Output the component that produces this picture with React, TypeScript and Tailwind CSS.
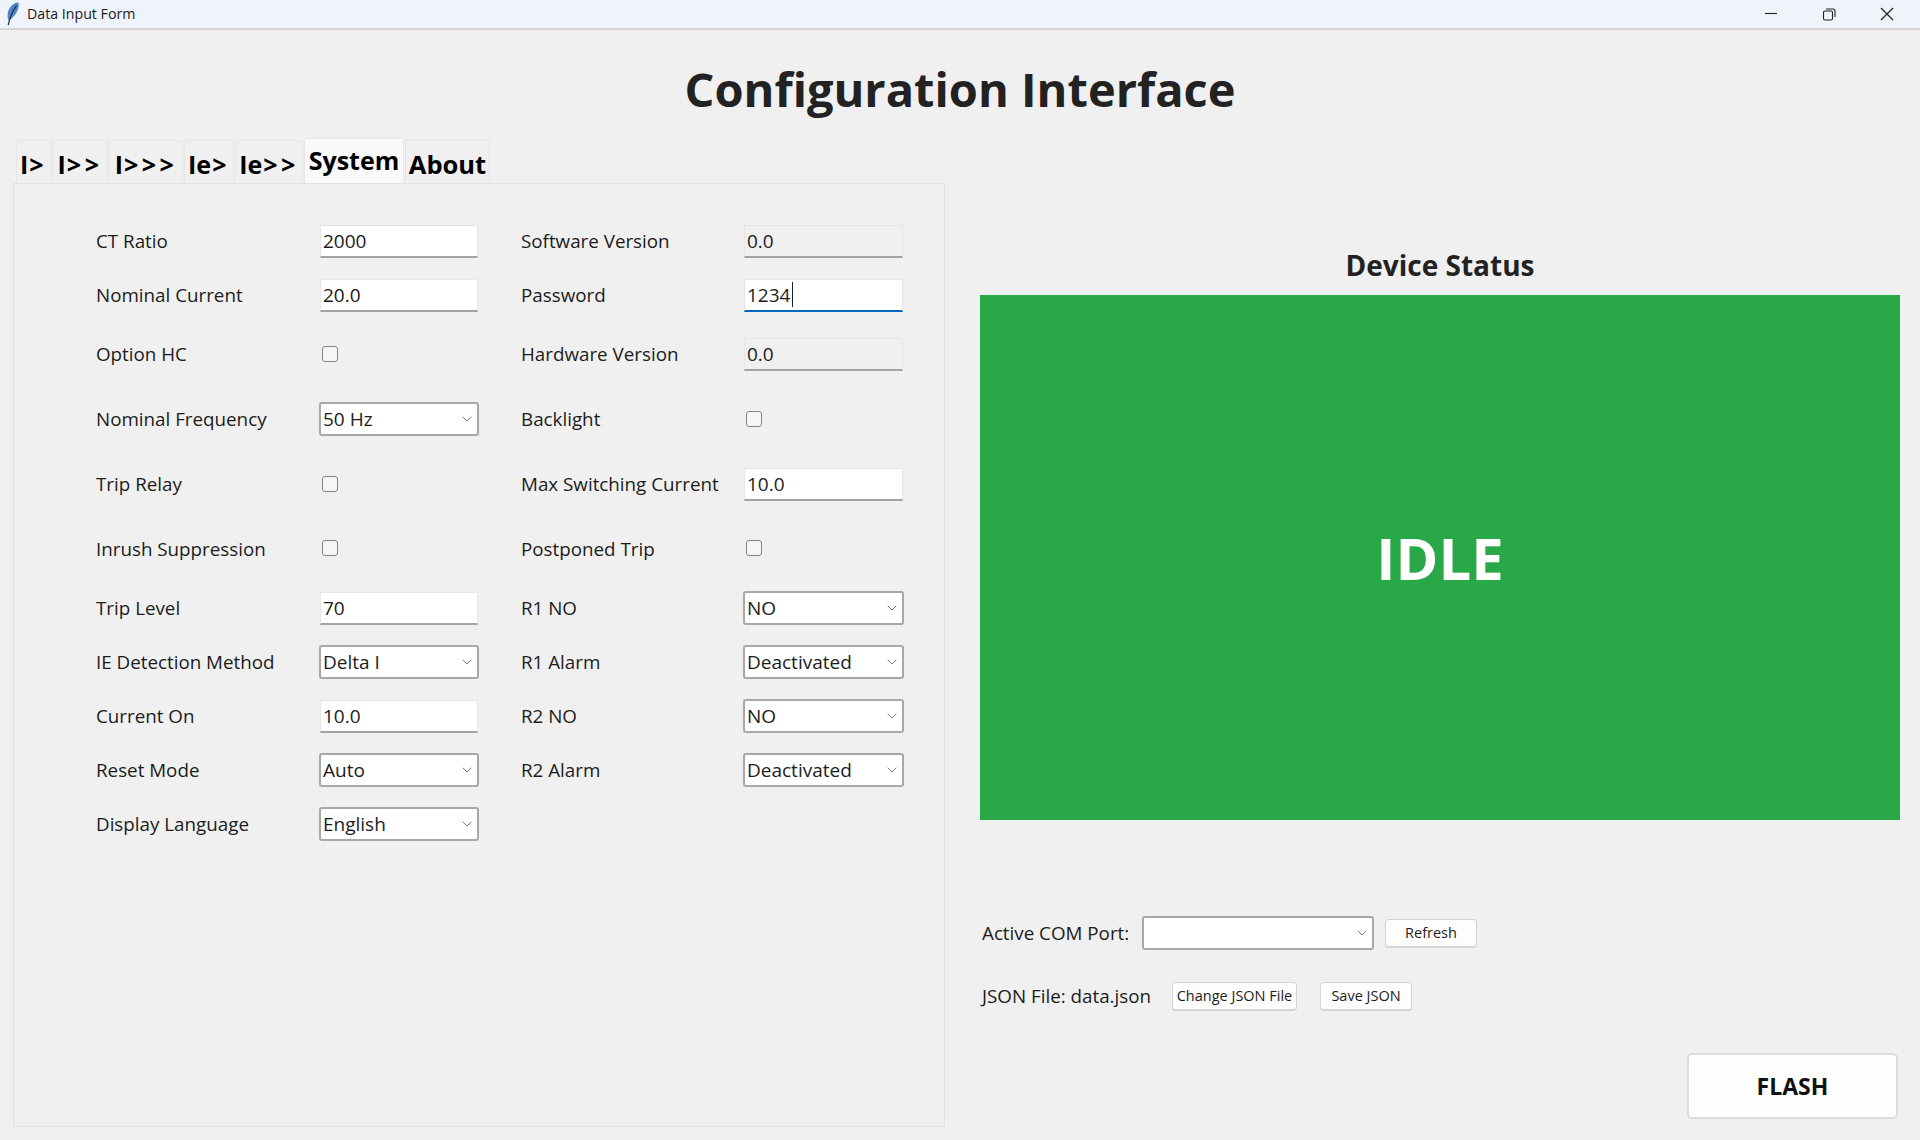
import React from 'react';
import { ChevronDown } from 'lucide-react';

const FONT = 'font-["Open_Sans","Noto_Sans",sans-serif]';

const TextField = ({ value, readOnly, focused }: { value: string; readOnly?: boolean; focused?: boolean }) => (
  <div className="relative w-full h-[33px] -mt-[2px]">
    <input
      readOnly
      value={value}
      className={`w-full h-full pl-[2px] text-[19px] text-[#1c1c1c] outline-none border border-[#e6e6e6] ${
        focused ? 'bg-white border-b-2 border-b-[#0067c0]' : readOnly ? 'bg-[#f0f0f0] border-b-2 border-b-[#a3a3a3]' : 'bg-white border-b-2 border-b-[#a3a3a3]'
      }`}
    />
    {focused && <span className="absolute left-[48px] top-[3px] w-[1px] h-[25px] bg-[#222]" />}
  </div>
);

const Combo = ({ value }: { value?: string }) => (
  <div className="w-[calc(100%+2px)] -ml-[1px] -mt-[2px] h-[34px] flex items-center justify-between pl-[2px] pr-[2px] bg-white border-2 border-[#a8a8a8] rounded-[3px] text-[19px] text-[#1c1c1c]">
    <span>{value}</span>
    <ChevronDown size={16} strokeWidth={1.3} className="text-[#666]" />
  </div>
);

const Check = () => (
  <input type="checkbox" readOnly className="appearance-none block w-[16px] h-[16px] ml-[2px] -mt-[3px] bg-[#f6f6f6] border border-[#858585] rounded-[3px]" />
);

type Row = { label: string; kind: 'text' | 'readonly' | 'focus' | 'combo' | 'check'; value?: string };

const leftRows: Row[] = [
  { label: 'CT Ratio', kind: 'text', value: '2000' },
  { label: 'Nominal Current', kind: 'text', value: '20.0' },
  { label: 'Option HC', kind: 'check' },
  { label: 'Nominal Frequency', kind: 'combo', value: '50 Hz' },
  { label: 'Trip Relay', kind: 'check' },
  { label: 'Inrush Suppression', kind: 'check' },
  { label: 'Trip Level', kind: 'text', value: '70' },
  { label: 'IE Detection Method', kind: 'combo', value: 'Delta I' },
  { label: 'Current On', kind: 'text', value: '10.0' },
  { label: 'Reset Mode', kind: 'combo', value: 'Auto' },
  { label: 'Display Language', kind: 'combo', value: 'English' },
];

const rightRows: Row[] = [
  { label: 'Software Version', kind: 'readonly', value: '0.0' },
  { label: 'Password', kind: 'focus', value: '1234' },
  { label: 'Hardware Version', kind: 'readonly', value: '0.0' },
  { label: 'Backlight', kind: 'check' },
  { label: 'Max Switching Current', kind: 'text', value: '10.0' },
  { label: 'Postponed Trip', kind: 'check' },
  { label: 'R1 NO', kind: 'combo', value: 'NO' },
  { label: 'R1 Alarm', kind: 'combo', value: 'Deactivated' },
  { label: 'R2 NO', kind: 'combo', value: 'NO' },
  { label: 'R2 Alarm', kind: 'combo', value: 'Deactivated' },
];

const FormColumn = ({ rows, labelClass }: { rows: Row[]; labelClass: string }) => (
  <div className={`grid ${labelClass} grid-rows-[54px_54px_64px_66px_64px_65px_54px_54px_54px_54px_54px] items-center`}>
    {rows.map((r) => (
      <React.Fragment key={r.label}>
        <label className="text-[18.8px] text-[#1c1c1c] whitespace-nowrap -mt-[1px]">{r.label}</label>
        {r.kind === 'check' && <Check />}
        {r.kind === 'combo' && <Combo value={r.value} />}
        {r.kind === 'text' && <TextField value={r.value!} />}
        {r.kind === 'readonly' && <TextField value={r.value!} readOnly />}
        {r.kind === 'focus' && <TextField value={r.value!} focused />}
      </React.Fragment>
    ))}
  </div>
);

const tabs = [
  { name: 'I', arrows: '>', w: 'w-[35px]' },
  { name: 'I', arrows: '>>', w: 'w-[56px]' },
  { name: 'I', arrows: '>>>', w: 'w-[74px]' },
  { name: 'Ie', arrows: '>', w: 'w-[50px]' },
  { name: 'Ie', arrows: '>>', w: 'w-[68px]' },
];

const SmallButton = ({ children, w }: { children: React.ReactNode; w: string }) => (
  <button className={`${w} h-[29px] bg-[#fdfdfd] border border-[#d4d4d4] border-b-2 rounded-[4px] text-[14.5px] text-[#1c1c1c] whitespace-nowrap`}>
    {children}
  </button>
);

export default function App() {
  return (
    <div className={`w-[1920px] h-[1140px] flex flex-col overflow-hidden bg-[#f0f0f0] ${FONT}`}>
      {/* title bar */}
      <div className="h-[30px] shrink-0 flex items-center bg-[#eff4fb] border-b-2 border-[#d5d5d5]">
        <svg width="14" height="24" viewBox="0 0 14 24" className="ml-[6px]">
          <path d="M12 0.5 C7 1 3 5 1.8 11 C1.2 14.5 1.8 17 2.8 18.5 C6.5 16.5 10.5 12 12.2 6.5 C13 3.8 13 1.5 12 0.5 Z" fill="#4f86c6" />
          <path d="M10.5 3.5 C7 8.5 4 15 2.2 23" fill="none" stroke="#20303f" strokeWidth="1.3" />
        </svg>
        <span className="ml-[7px] text-[14.2px] text-[#1c1c1c]">Data Input Form</span>
        <div className="ml-auto flex items-center mr-[3px]">
          <svg width="58" height="29" viewBox="0 0 58 29"><path d="M23 13.5 H35" stroke="#222" strokeWidth="1.1" /></svg>
          <svg width="58" height="29" viewBox="0 0 58 29" fill="none" stroke="#222" strokeWidth="1.1">
            <rect x="23.5" y="11" width="9" height="9" rx="1.5" />
            <path d="M26 9 H33 Q35 9 35 11 V17" />
          </svg>
          <svg width="58" height="29" viewBox="0 0 58 29" className="mr-[1px]"><path d="M23 8 L35 20 M35 8 L23 20" stroke="#222" strokeWidth="1.2" /></svg>
        </div>
      </div>

      <h1 className="h-[108px] shrink-0 flex items-center justify-center text-[47px] font-bold text-[#222] pt-[11px]">
        Configuration Interface
      </h1>

      <div className="flex-1 flex min-h-0">
        {/* tabs and form */}
        <div className="ml-[13px] w-[932px] mb-[13px] flex flex-col">
          <div className="h-[45px] shrink-0 flex items-end pl-[3px] gap-[1px]">
            {tabs.map((t) => (
              <div key={t.name + t.arrows} className={`${t.w} h-[43px] flex items-end justify-center bg-[#f0f0f0] border border-b-0 border-[#e6e6e6] text-[25px] font-bold text-black whitespace-nowrap`}>
                <span>{t.name}</span>
                <span className="tracking-[3.5px] ml-[1px]">{t.arrows}</span>
              </div>
            ))}
            <div className="w-[100px] h-[45px] flex items-center justify-center bg-[#f9f9f9] border border-b-0 border-[#e6e6e6] text-[25px] font-bold text-black">
              System
            </div>
            <div className="w-[85px] h-[43px] flex items-end justify-center bg-[#f0f0f0] border border-b-0 border-[#e6e6e6] text-[25.5px] font-bold text-black">
              About
            </div>
          </div>
          <div className="flex-1 flex border border-[#e2e2e2] pt-[31px] pl-[82px]">
            <FormColumn rows={leftRows} labelClass="w-[382px] grid-cols-[224px_158px]" />
            <div className="ml-[43px]">
              <FormColumn rows={rightRows} labelClass="w-[382px] grid-cols-[223px_159px]" />
            </div>
          </div>
        </div>

        {/* status side */}
        <div className="ml-[35px] w-[920px] flex flex-col">
          <h2 className="h-[60px] mt-[97px] shrink-0 flex items-center justify-center text-[28px] font-bold text-[#222]">Device Status</h2>
          <div className="h-[525px] shrink-0 flex items-center justify-center bg-[#29a847] text-white text-[58px] font-bold">IDLE</div>

          <div className="mt-[97px] ml-[2px] flex items-center h-[33px]">
            <span className="w-[161px] text-[18.8px] text-[#1c1c1c]">Active COM Port:</span>
            <div className="w-[230px]"><Combo /></div>
            <div className="ml-[12px]"><SmallButton w="w-[92px]">Refresh</SmallButton></div>
          </div>
          <div className="mt-[30px] ml-[2px] flex items-center h-[33px]">
            <span className="w-[190px] text-[18.8px] text-[#1c1c1c]">JSON File: data.json</span>
            <SmallButton w="w-[125px]">Change JSON File</SmallButton>
            <div className="ml-[23px]"><SmallButton w="w-[92px]">Save JSON</SmallButton></div>
          </div>

          <button className="mt-auto mb-[21px] mr-[2px] self-end w-[211px] h-[66px] bg-[#fdfdfd] border-2 border-[#dcdcdc] rounded-[5px] text-[23px] font-bold text-[#111]">
            FLASH
          </button>
        </div>
      </div>
    </div>
  );
}
